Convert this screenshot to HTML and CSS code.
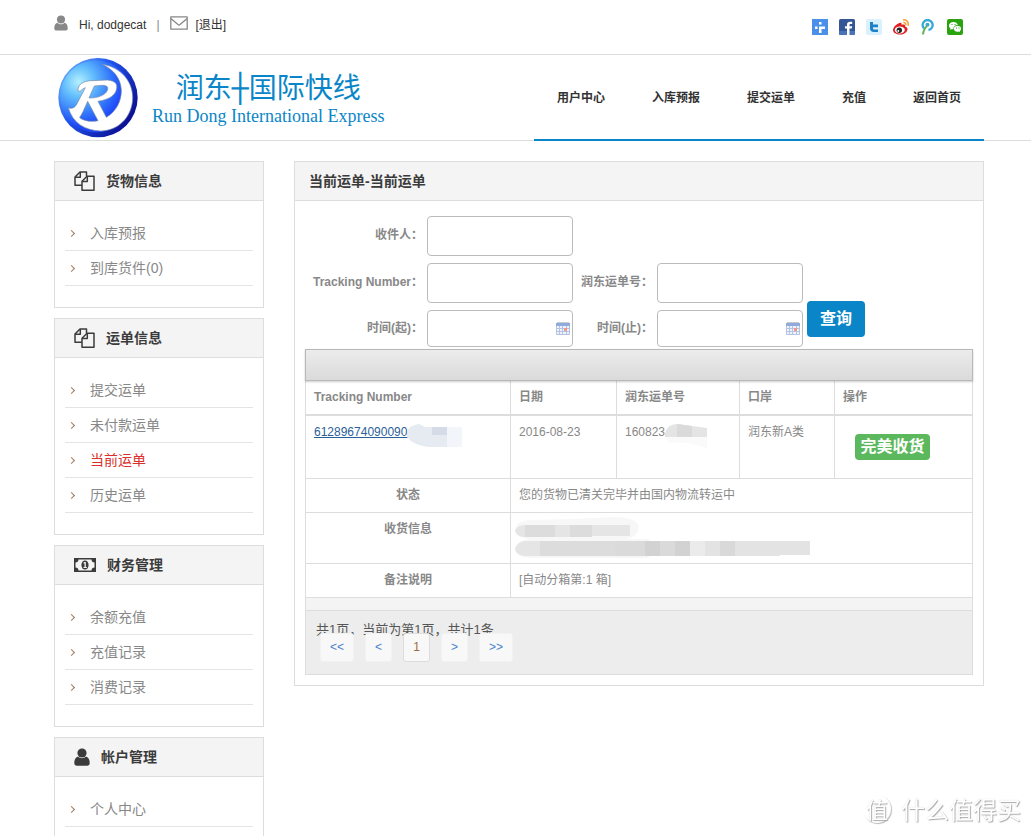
FILE: index.html
```html
<!DOCTYPE html>
<html lang="zh-CN">
<head>
<meta charset="utf-8">
<title>当前运单</title>
<link rel="stylesheet" href="styles.css">
</head>
<body>
<svg class="defs" aria-hidden="true">
  <symbol id="user" viewBox="0 0 16 18"><circle cx="8" cy="5" r="4.6"/><path d="M4 8.6C1.2 9.4.3 12 .3 15c0 1.700 1 2.700 2.600 2.700h10.200c1.600 0 2.600-1 2.600-2.700 0-3-.9-5.600-3.700-6.400C10.800 9.800 9.500 10.300 8 10.300S5.200 9.800 4 8.600z"/></symbol>
  <symbol id="files" viewBox="0 0 21 20"><g fill="none" stroke="currentColor" stroke-width="1.5" stroke-linejoin="round"><path d="M8 14.200H1V6L6 1h6.500v4"/><path d="M6.300 1v5.300H1"/><path d="M8 10.300 13 5.300h7V19.200H8z"/><path d="M13.300 5.300v5.300H8"/></g></symbol>
  <symbol id="money" viewBox="0 0 22 14"><path fill-rule="evenodd" d="M0 0h22v14H0zM4.500 1.500C4.500 3.300 3.300 4.500 1.500 4.500v5c1.800 0 3 1.200 3 3h13c0-1.800 1.200-3 3-3v-5c-1.800 0-3-1.200-3-3z"/><ellipse cx="11" cy="7" rx="3.600" ry="4.600"/><path fill="#f4f4f4" d="M10.300 4h1.500v5h1v1H9.500V9h1V5.500h-1v-.8z"/></symbol>
  <symbol id="cal" viewBox="0 0 14 13"><path fill="#eef3fb" d="M.5 1h13v11.500H.5z"/><path fill="#8faadc" d="M0 1h14v3H0z"/><path fill="#c9c9c9" d="M1 0h12v1H1z"/><path fill="none" stroke="#b4c3e2" d="M.5 4v8.500h13V4M.5 6.500h13M.5 9.500h13M3.500 4v8M6.500 4v8M10.500 4v8"/><path fill="#f09a86" d="M8 6h3v3H8z"/></symbol>
</svg>

<header>
  <div class="topbar wrap">
    <div class="account">
      <svg class="i-user"><use href="#user"/></svg>
      <span class="hello">Hi, dodgecat</span><span class="bar">|</span>
      <svg class="i-mail" viewBox="0 0 18 14"><path fill="none" stroke="#888" stroke-width="1.300" stroke-linejoin="round" d="M.8.8h16.400v12.400H.8zM.8 2.500 8 8.600q1 .8 2 0l7.200-6.100"/></svg>
      <a href="#">[退出]</a>
    </div>
    <div class="social">
      <a href="#" aria-label="分享"><svg viewBox="0 0 16 16"><path fill="#4a90e8" d="M0 0h16v16H0z"/><path fill="#fff" d="M7 3h2.500v2.500H7zM7 7.500h6V10H9.500v4H7zM3 7.500h2.500V10H3z"/></svg></a>
      <a href="#" aria-label="Facebook"><svg viewBox="0 0 16 16"><rect width="16" height="16" rx="1.500" fill="#335796"/><path fill="#4b73b8" d="M0 12h16v2.500Q16 16 14.500 16h-13Q0 16 0 14.500z"/><path fill="#fff" d="M8 16V9.500H6V7.200h2V5.500C8 3.500 9.300 2.700 11 2.700h2.200V5h-1.500c-.8 0-1.200.3-1.200 1v1.200h2.700l-.4 2.300h-2.300V16z"/></svg></a>
      <a href="#" aria-label="Twitter"><svg viewBox="0 0 16 16"><rect width="16" height="16" rx="2" fill="#d8f1fd"/><path fill="#1f80c8" d="M4 3h3v2.500h5v2.700H7v1c0 1 .5 1.400 1.500 1.400H12V13H8c-2.700 0-4-1.300-4-3.700z"/></svg></a>
      <a href="#" aria-label="微博"><svg viewBox="0 0 16 16"><path fill="#df1f22" d="M6.500 4C8 3.500 9 4 8.500 5.800c2-.8 4-.4 3.700 1.600 1.300.4 2.300 1.200 2.300 2.600 0 3-3.300 5.600-7.300 5.600S0 13.700 0 11c0-2.600 3.500-6.200 6.500-7z"/><ellipse cx="6.800" cy="11" rx="5" ry="3.400" fill="#fff"/><circle cx="6.300" cy="11.300" r="2.700" fill="#222"/><circle cx="5.300" cy="12" r=".9" fill="#fff"/><path fill="none" stroke="#f39b2a" stroke-width="1.400" d="M10 .9c3.600-.6 6 2.300 5 5.800M10.300 3.500c1.800-.2 3 1 2.500 2.800"/></svg></a>
      <a href="#" aria-label="腾讯微博"><svg viewBox="0 0 16 16"><path fill="none" stroke="#35a8d8" stroke-width="2.300" d="M4 9.500A5 5 0 1 1 8.500 11"/><circle cx="7.500" cy="5.700" r="2" fill="#35a8d8"/><path fill="none" stroke="#63b357" stroke-width="2" d="M7 7c-2.300 2-3.600 4.700-4 8.500"/></svg></a>
      <a href="#" aria-label="微信"><svg viewBox="0 0 16 16"><rect width="16" height="16" rx="2" fill="#29a40e"/><path fill="#fff" d="M6.500 3C4 3 2 4.600 2 6.700c0 1.200.6 2.100 1.600 2.800L3.200 11l1.700-.9c.6.200 1.100.2 1.700.2C6 7.500 8.500 5.800 10.800 6 10.300 4.200 8.600 3 6.500 3z"/><path fill="#fff" d="M10.500 6.700c-2 0-3.600 1.300-3.600 3s1.600 3 3.600 3c.4 0 .8 0 1.200-.2l1.400.8-.4-1.300c.9-.6 1.400-1.400 1.400-2.300 0-1.700-1.600-3-3.600-3z"/><path fill="#29a40e" d="M4.500 5h1v1h-1zM7.500 5h1v1h-1zM9 8.500h1v1H9zM11.500 8.500h1v1h-1z"/></svg></a>
    </div>
  </div>
  <div class="masthead">
    <div class="wrap mast-row">
      <a class="brand" href="#">
        <svg class="logo" viewBox="9 6 246 246" aria-hidden="true">
          <defs>
            <radialGradient id="g1" cx=".26" cy=".3" r=".62"><stop offset="0" stop-color="#b4f0ff"/><stop offset=".35" stop-color="#62bdfc"/><stop offset=".75" stop-color="#2f72fb"/><stop offset="1" stop-color="#1f48fa"/></radialGradient>
            <linearGradient id="g2" x1="0" y1="0" x2="1" y2=".7"><stop offset="0" stop-color="#7cc8fb"/><stop offset=".45" stop-color="#2256ee"/><stop offset="1" stop-color="#0a0c90"/></linearGradient>
          </defs>
          <circle cx="132" cy="128" r="119" fill="url(#g2)"/>
          <circle cx="126" cy="124" r="108" fill="url(#g1)"/>
          <path fill="#fff" fill-rule="evenodd" stroke="#7787a5" stroke-width="2" stroke-linejoin="round" d="M145 28C200 36 238 80 236 132 233 188 192 227 140 228 92 226 56 204 43 158C54 163 63 158 69 146L94 98C84 101 78 112 72 108 70 90 86 78 112 77L160 75C186 77 194 90 185 110 177 126 160 134 132 139L157 187C186 170 203 138 202 105 200 70 180 45 145 28zM121 93 105 129C132 130 158 119 161 103 163 93 154 91 145 91zM101 139 87 170C82 180 79 183 77 188 92 199 112 201 132 197z"/>
        </svg>
        <span class="brand-text">
          <span class="brand-cn">润东<span class="cross">┼</span>国际快线</span>
          <span class="brand-en">Run Dong International Express</span>
        </span>
      </a>
      <nav class="nav">
        <a href="#">用户中心</a><a href="#">入库预报</a><a href="#">提交运单</a><a href="#">充值</a><a href="#">返回首页</a>
      </nav>
    </div>
  </div>
</header>

<div class="wrap layout">
  <aside class="side">
    <section class="panel">
      <h2 class="panel-head"><svg class="i-files"><use href="#files"/></svg>货物信息</h2>
      <ul class="menu"><li><a href="#">入库预报</a></li><li><a href="#">到库货件(0)</a></li></ul>
    </section>
    <section class="panel">
      <h2 class="panel-head"><svg class="i-files"><use href="#files"/></svg>运单信息</h2>
      <ul class="menu"><li><a href="#">提交运单</a></li><li><a href="#">未付款运单</a></li><li><a class="current" href="#">当前运单</a></li><li><a href="#">历史运单</a></li></ul>
    </section>
    <section class="panel">
      <h2 class="panel-head"><svg class="i-money"><use href="#money"/></svg>财务管理</h2>
      <ul class="menu"><li><a href="#">余额充值</a></li><li><a href="#">充值记录</a></li><li><a href="#">消费记录</a></li></ul>
    </section>
    <section class="panel">
      <h2 class="panel-head"><svg class="i-acct"><use href="#user"/></svg>帐户管理</h2>
      <ul class="menu"><li><a href="#">个人中心</a></li></ul>
    </section>
  </aside>

  <main class="panel content">
    <h1 class="panel-head title">当前运单-当前运单</h1>
    <div class="body">
      <form class="search">
        <label for="rcv">收件人：</label><input id="rcv" type="text">
        <label class="row-start" for="trk">Tracking Number：</label><input id="trk" type="text">
        <label for="rd">润东运单号：</label><input id="rd" type="text">
        <label class="row-start" for="t1">时间(起)：</label><span class="date"><input id="t1" type="text"><svg><use href="#cal"/></svg></span>
        <label for="t2">时间(止)：</label><span class="date"><input id="t2" type="text"><svg><use href="#cal"/></svg></span>
        <button class="query" type="button">查询</button>
      </form>
      <div class="toolbar"></div>
      <table class="orders">
        <colgroup><col class="c1"><col class="c2"><col class="c3"><col class="c4"><col></colgroup>
        <thead><tr><th>Tracking Number</th><th>日期</th><th>润东运单号</th><th>口岸</th><th>操作</th></tr></thead>
        <tbody>
          <tr class="order">
            <td><span class="masked"><a href="#">61289674090090</a><svg class="mask-a" viewBox="0 0 55 24"><path fill="#e6ebf2" d="M0 8Q2 1 12 0L18 3H40V23H22Q4 21 0 12z"/><path fill="#d5dce8" d="M25 3h15v8H25z"/><path fill="#f2f5fa" d="M40 3h15v20H40z"/></svg></span></td>
            <td>2016-08-23</td>
            <td><span class="masked">160823<svg class="mask-b" viewBox="0 0 42 24"><path fill="#e4e4e4" d="M0 10Q2 0 12 0L42 4V13H0z"/><path fill="#dadada" d="M12 0 27 2v11H12z"/><path fill="#fafafa" d="M0 13h42v11Q20 17 4 19z"/></svg></span></td>
            <td>润东新A类</td>
            <td><button class="done" type="button">完美收货</button></td>
          </tr>
          <tr><th>状态</th><td colspan="4">您的货物已清关完毕并由国内物流转运中</td></tr>
          <tr class="receiver"><th>收货信息</th><td colspan="4">
            <svg class="mask-c" viewBox="0 0 296 42"><path fill="#f7f7f7" d="M0 13Q2 3 16 3L60 2 100 0Q122 0 124 10 122 22 108 22H16Q2 22 0 13zM0 32Q2 22 16 22H134V41H16Q2 41 0 32z"/><path fill="#dcdcdc" d="M10 8h30v12H10zM55 8h22v12H55zM25 24h75v15H25z"/><path fill="#e5e5e5" d="M40 8h15v12H40zM77 8h38v11H77zM0 32Q2 25 10 24H25V39H10Q2 39 0 32zM0 14Q2 8 10 8V20Q2 20 0 14z"/><path fill="#dadada" d="M100 24h75v15h-75z"/><path fill="#d2d2d2" d="M130 24h15v15h-15zM160 24h15v15h-15z"/><path fill="#ebebeb" d="M175 24h15v15h-15z"/><path fill="#e3e3e3" d="M190 24h75v15h-75zM265 24h30v14h-30z"/><path fill="#d9d9d9" d="M205 24h15v15h-15z"/></svg>
          </td></tr>
          <tr><th>备注说明</th><td colspan="4">[自动分箱第:1 箱]</td></tr>
        </tbody>
      </table>
      <div class="strip"></div>
      <div class="pager">
        <p>共1页，当前为第1页，共计1条</p>
        <div class="pages">
          <a href="#">&lt;&lt;</a><a href="#">&lt;</a><a class="on" href="#">1</a><a href="#">&gt;</a><a href="#">&gt;&gt;</a>
        </div>
      </div>
    </div>
  </main>
</div>

<div class="watermark" aria-hidden="true"><span class="seal">值</span>什么值得买</div>
</body>
</html>
```
FILE: styles.css
```css
* { box-sizing: border-box; }
html { height: 100%; overflow: hidden; }
body {
  margin: 0;
  height: 100%;
  overflow: hidden;
  background: #fff;
  color: #888;
  font: 12px/18px "Liberation Sans", "Noto Sans CJK SC", sans-serif;
}
a { color: inherit; text-decoration: none; }
svg { display: block; flex: none; }
h1, h2, p, ul { margin: 0; padding: 0; }
input, button { font: inherit; }
.defs { position: absolute; width: 0; height: 0; }
.wrap { padding: 0 47px 0 54px; }

.topbar { display: flex; justify-content: space-between; height: 54px; }
.account { display: flex; align-items: center; height: 50px; color: #333; }
.account svg { margin-bottom: 4px; }
.i-user { width: 14px; height: 16px; fill: #888; }
.hello { margin-left: 11px; }
.bar { margin: 0 10px; color: #888; }
.i-mail { width: 18px; height: 14px; margin-right: 8px; }
.social { display: flex; align-items: center; gap: 11px; height: 54px; padding-right: 21px; }
.social svg { width: 16px; height: 16px; }

.masthead { border-top: 1px solid #ddd; border-bottom: 1px solid #ddd; }
.mast-row { display: flex; justify-content: space-between; height: 85px; }
.brand { display: flex; align-items: center; gap: 13px; padding-left: 3px; color: #0a86c8; }
.logo { width: 82px; height: 82px; }
.brand-text { display: flex; flex-direction: column; align-items: center; padding-top: 2px; white-space: nowrap; }
.brand-cn { font: 28px/32px "Noto Sans CJK SC", sans-serif; }
.cross { font-family: "DejaVu Sans Mono", monospace; }
.brand-en { font: 18px/22px "Liberation Serif", serif; }
.nav {
  display: flex;
  gap: 47px;
  height: 86px;
  padding: 0 23px;
  border-bottom: 2px solid #0a86c8;
  color: #333;
  font-weight: bold;
  line-height: 86px;
  white-space: nowrap;
}

.layout { display: flex; align-items: flex-start; gap: 30px; padding-top: 20px; }
.side { display: flex; flex: none; flex-direction: column; gap: 10px; width: 210px; }
.panel { border: 1px solid #ddd; }
.panel-head {
  display: flex;
  align-items: center;
  height: 39px;
  padding-left: 19px;
  border-bottom: 1px solid #ddd;
  background: #f4f4f4;
  color: #3b3b3b;
  font-size: 14px;
  font-weight: bold;
}
.panel-head svg { fill: currentColor; margin-right: 11px; }
.i-files { width: 21px; height: 20px; }
.i-money { width: 22px; height: 14px; }
.i-acct { width: 16px; height: 18px; }
.menu { padding: 15px 10px 21px; list-style: none; font-size: 14px; }
.menu li { height: 35px; border-bottom: 1px solid #e4e4e4; line-height: 34px; }
.menu a { display: flex; align-items: center; gap: 16px; padding-left: 4px; }
.menu a::before {
  content: "";
  width: 4px;
  height: 4px;
  border: solid #a07a5c;
  border-width: 1px 1px 0 0;
  transform: rotate(45deg);
}
.menu .current { color: #d9302c; }

.content { flex: 1; min-width: 0; }
.title { padding-left: 14px; }
.body { padding: 15px 10px 10px; }
.search {
  display: grid;
  grid-template-columns: 118px 146px 76px 146px max-content;
  gap: 7px 4px;
  align-items: center;
  margin-bottom: 2px;
}
.search label { padding-bottom: 2px; font-weight: bold; text-align: right; white-space: nowrap; }
.search input { width: 100%; height: 40px; padding: 0 8px; border: 1px solid #bbb; border-radius: 4px; background: #fff; }
.row-start { grid-column: 1; }
.date { position: relative; }
.search .date input { display: block; height: 37px; padding-right: 24px; }
.date svg { position: absolute; right: 3px; top: 12px; width: 14px; height: 13px; }
.query {
  grid-column: 5;
  grid-row: 2 / 4;
  align-self: end;
  width: 58px;
  height: 36px;
  margin-bottom: 10px;
  padding: 0;
  border: 0;
  border-radius: 4px;
  background: #0a86c8;
  color: #fff;
  font-size: 16px;
  font-weight: bold;
}

.toolbar {
  position: relative;
  height: 32px;
  border: 1px solid #b8b8b8;
  background: linear-gradient(#ececec, #dadada);
  box-shadow: 0 1px 2px rgba(0, 0, 0, .2);
}
.orders { width: 100%; border-collapse: collapse; table-layout: fixed; }
.c1 { width: 205px; }
.c2 { width: 106px; }
.c3 { width: 123px; }
.c4 { width: 95px; }
.orders th, .orders td { height: 34px; padding: 8px; border: 1px solid #ddd; text-align: left; vertical-align: top; line-height: 17px; }
.orders thead th { border-top: 0; border-bottom-width: 2px; }
.orders tbody th { text-align: center; }
.orders .order td { height: 63px; }
.orders .receiver td { height: 51px; padding: 4px; }
.masked { display: flex; height: 17px; }
.masked a { color: #2b5f98; text-decoration: underline; }
.mask-a { width: 55px; height: 24px; }
.mask-b { width: 42px; height: 24px; }
.mask-c { width: 296px; height: 42px; }
.done {
  width: 75px;
  height: 26px;
  margin: 10px 0 0 12px;
  padding: 0;
  border: 0;
  border-radius: 4px;
  background: #5cb85c;
  color: #fff;
  font-size: 16px;
  font-weight: bold;
  line-height: 26px;
}
.strip { height: 12px; border: solid #ddd; border-width: 0 1px; background: #f4f4f4; }
.pager { height: 65px; padding: 12px 10px; border: 1px solid #ddd; background: #ededed; color: #555; }
.pager p { height: 10px; font-size: 13px; line-height: 14px; }
.pages { position: relative; display: flex; gap: 11px; padding-left: 4px; }
.pages a {
  min-width: 27px;
  height: 29px;
  padding: 0 9px;
  border: 1px solid #f2f2f2;
  border-radius: 3px;
  background: #f8f8f8;
  color: #4a80cc;
  line-height: 27px;
  text-align: center;
}
.pages .on { border-color: #ddd; color: #a06a3c; }

.watermark {
  position: fixed;
  right: 10px;
  bottom: 9px;
  display: flex;
  align-items: center;
  gap: 10px;
  color: #fff;
  font: 24px/36px "Noto Sans CJK SC", sans-serif;
  text-shadow: 1px 1px 1px #aaa, 0 0 1px #ccc;
}
.seal { width: 28px; height: 28px; border-radius: 50%; box-shadow: 1px 1px 1px #bbb; font-size: 22px; line-height: 26px; text-align: center; }
```
